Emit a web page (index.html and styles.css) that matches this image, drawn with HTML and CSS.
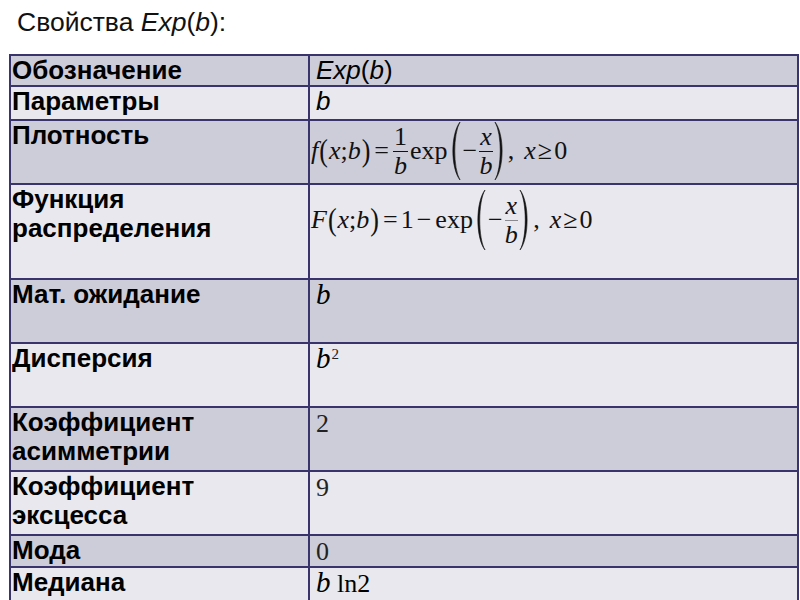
FILE: index.html
```html
<!DOCTYPE html>
<html lang="ru">
<head>
<meta charset="utf-8">
<title>Свойства Exp(b)</title>
<link rel="stylesheet" href="styles.css">
</head>
<body>
<div class="title">Свойства <i>Exp</i>(<i>b</i>):</div>
<table class="props">
  <colgroup><col class="c1"><col class="c2"></colgroup>
  <tr class="dark h31">
    <td class="name">Обозначение</td>
    <td class="sans"><i>Exp</i>(<i>b</i>)</td>
  </tr>
  <tr class="light h34">
    <td class="name">Параметры</td>
    <td class="sans"><i>b</i></td>
  </tr>
  <tr class="dark h64">
    <td class="name">Плотность</td>
    <td class="formula f1">
      <div class="math">
        <i class="v">f</i><span class="sp">(</span><i class="v">x</i><span>;</span><i class="v">b</i><span class="sp">)</span><span class="op">=</span>
        <span class="frac"><span class="num">1</span><span class="den"><i>b</i></span></span>
        <span class="fn">exp</span>
        <svg class="bigp" width="13" height="60" viewBox="0 0 13 60"><path d="M12 1 C2.5 13 2.5 47 12 59 C5 47 5 13 12 1 Z" fill="#111" stroke="#111" stroke-width="0.6"/></svg>
        <span class="minus">−</span>
        <span class="frac"><span class="num"><i>x</i></span><span class="den"><i>b</i></span></span>
        <svg class="bigp" width="13" height="60" viewBox="0 0 13 60"><path d="M1 1 C10.5 13 10.5 47 1 59 C8 47 8 13 1 1 Z" fill="#111" stroke="#111" stroke-width="0.6"/></svg>
        <span class="comma">,</span>
        <i class="v">x</i><span class="ge">≥</span><span>0</span>
      </div>
    </td>
  </tr>
  <tr class="light h95">
    <td class="name">Функция<br>распределения</td>
    <td class="formula f2">
      <div class="math">
        <i class="v">F</i><span class="sp">(</span><i class="v">x</i><span>;</span><i class="v">b</i><span class="sp">)</span><span class="op">=</span><span>1</span><span class="op">−</span><span class="fn">exp</span>
        <svg class="bigp" width="13" height="62" viewBox="0 0 13 62"><path d="M12 1 C2.5 13 2.5 49 12 61 C5 49 5 13 12 1 Z" fill="#111" stroke="#111" stroke-width="0.6"/></svg>
        <span class="minus">−</span>
        <span class="frac thin"><span class="num"><i>x</i></span><span class="den"><i>b</i></span></span>
        <svg class="bigp" width="13" height="62" viewBox="0 0 13 62"><path d="M1 1 C10.5 13 10.5 49 1 61 C8 49 8 13 1 1 Z" fill="#111" stroke="#111" stroke-width="0.6"/></svg>
        <span class="comma">,</span>
        <i class="v">x</i><span class="ge">≥</span><span>0</span>
      </div>
    </td>
  </tr>
  <tr class="dark h64">
    <td class="name">Мат. ожидание</td>
    <td class="serif"><i class="bv">b</i></td>
  </tr>
  <tr class="light h64">
    <td class="name">Дисперсия</td>
    <td class="serif"><i class="bv">b</i><span class="sq">2</span></td>
  </tr>
  <tr class="dark h64">
    <td class="name">Коэффициент<br>асимметрии</td>
    <td class="serif num-val">2</td>
  </tr>
  <tr class="light h64">
    <td class="name">Коэффициент<br>эксцесса</td>
    <td class="serif num-val">9</td>
  </tr>
  <tr class="dark h32">
    <td class="name">Мода</td>
    <td class="serif num-val">0</td>
  </tr>
  <tr class="light h40">
    <td class="name">Медиана</td>
    <td class="serif"><i class="bv">b</i> <span class="ln">ln2</span></td>
  </tr>
</table>
</body>
</html>
```

FILE: styles.css
```css
html, body {
  margin: 0;
  padding: 0;
  background: #ffffff;
}

body {
  font-family: "Liberation Sans", Arial, sans-serif;
  color: #000;
  overflow: hidden;
}

.title {
  height: 54px;
  box-sizing: border-box;
  padding: 7px 0 0 17px;
  font-size: 26.5px;
  line-height: 30px;
  color: #111;
}

.props {
  margin-left: 9px;
  width: 788px;
  border-collapse: collapse;
  table-layout: fixed;
}

.c1 { width: 299px; }
.c2 { width: 489px; }

.props td {
  box-sizing: border-box;
  border: 2px solid #39356c;
  padding: 0 0 0 1px;
  vertical-align: top;
  font-size: 26px;
  line-height: 29px;
}

.dark td { background: #cdcdd9; }
.light td { background: #e8e8ee; }

.h31 td { height: 31px; }
.h32 td { height: 32px; }
.h34 td { height: 34px; }
.h40 td { height: 40px; }
.h64 td { height: 64px; }
.h95 td { height: 95px; }

.name {
  font-weight: bold;
}

.sans {
  padding-left: 6px !important;
}

.serif {
  font-family: "Liberation Serif", "Times New Roman", serif;
  padding-left: 6px !important;
}

.bv {
  font-size: 29px;
  line-height: 29px;
}

.sq {
  display: inline-block;
  font-size: 15px;
  line-height: 15px;
  vertical-align: top;
  margin-top: 3px;
  margin-left: 1px;
  color: #222;
}

.num-val {
  font-size: 24px;
  line-height: 26px !important;
  padding-top: 3px !important;
  color: #222;
}

.ln {
  font-size: 26px;
}

.formula {
  font-family: "Liberation Serif", "Times New Roman", serif;
  font-size: 25px;
}

.f1 { padding-top: 0 !important; }
.f2 { padding-top: 4px !important; }

.math {
  display: flex;
  align-items: center;
  line-height: 28px;
  color: #111;
  white-space: nowrap;
}

.math .v { font-style: italic; }

.sp {
  display: inline-block;
  transform: scaleY(1.2);
  margin: 0 1px;
}

.op {
  margin: 0 3px;
}

.ge {
  margin: 0 2px;
}

.minus {
  margin: 0 1px 0 2px;
}

.comma {
  margin: 0 10px 0 1px;
}

.fn {
  margin-left: 1px;
}

.frac {
  display: flex;
  flex-direction: column;
  align-items: center;
  line-height: 26px;
  margin: 0 1px;
}

.frac .num {
  border-bottom: 1px solid #111;
  padding: 0 1px 1px;
}

.frac.thin .num {
  border-bottom-color: #8a8a90;
}

.frac .den {
  padding-top: 1px;
}

.bigp {
  display: block;
  flex: none;
}
```
